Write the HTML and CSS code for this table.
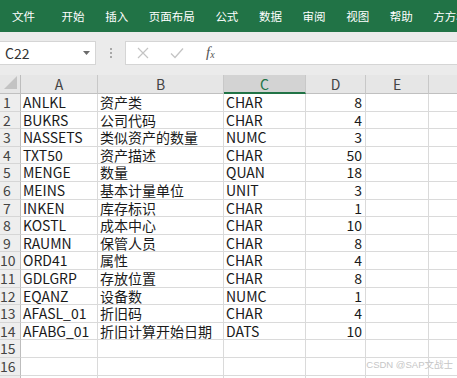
FILE: index.html
```html
<!DOCTYPE html>
<html>
<head>
<meta charset="utf-8">
<link rel="stylesheet" href="styles.css">
</head>
<body>
<div class="app">
  <nav class="ribbon">
    <span class="tab tab-file">文件</span>
    <span class="tab">开始</span>
    <span class="tab">插入</span>
    <span class="tab">页面布局</span>
    <span class="tab">公式</span>
    <span class="tab">数据</span>
    <span class="tab">审阅</span>
    <span class="tab">视图</span>
    <span class="tab">帮助</span>
    <span class="tab">方方格子</span>
  </nav>
  <div class="fbar">
    <div class="namebox">
      <span class="nb-text">C22</span>
      <svg class="nb-arrow" width="7" height="4" viewBox="0 0 7 4"><path d="M0 0H7L3.5 4Z" fill="#6b6b6b"/></svg>
    </div>
    <div class="grip">
      <span class="dot"></span><span class="dot"></span><span class="dot"></span>
    </div>
    <div class="formula">
      <svg class="ficon" width="12" height="12" viewBox="0 0 12 12"><path d="M1 1L11 11M11 1L1 11" stroke="#c4c4c4" stroke-width="1.2" fill="none"/></svg>
      <svg class="ficon ficon-check" width="14" height="12" viewBox="0 0 14 12"><path d="M1 6.5L5 10.5L13 1.5" stroke="#c4c4c4" stroke-width="1.3" fill="none"/></svg>
      <span class="fx">f<sub>x</sub></span>
    </div>
  </div>
  <div class="sheet">
    <div class="hdr corner"><svg width="14" height="14" viewBox="0 0 14 14"><path d="M13 0V13H0Z" fill="#c3c3c3"/></svg></div>
    <div class="hdr col">A</div>
    <div class="hdr col">B</div>
    <div class="hdr col sel">C</div>
    <div class="hdr col">D</div>
    <div class="hdr col">E</div>
    <div class="hdr col hdr-f">F</div>

    <div class="rh">1</div><div class="c">ANLKL</div><div class="c">资产类</div><div class="c">CHAR</div><div class="c n">8</div><div class="c"></div><div class="c"></div>
    <div class="rh">2</div><div class="c">BUKRS</div><div class="c">公司代码</div><div class="c">CHAR</div><div class="c n">4</div><div class="c"></div><div class="c"></div>
    <div class="rh">3</div><div class="c">NASSETS</div><div class="c">类似资产的数量</div><div class="c">NUMC</div><div class="c n">3</div><div class="c"></div><div class="c"></div>
    <div class="rh">4</div><div class="c">TXT50</div><div class="c">资产描述</div><div class="c">CHAR</div><div class="c n">50</div><div class="c"></div><div class="c"></div>
    <div class="rh">5</div><div class="c">MENGE</div><div class="c">数量</div><div class="c">QUAN</div><div class="c n">18</div><div class="c"></div><div class="c"></div>
    <div class="rh">6</div><div class="c">MEINS</div><div class="c">基本计量单位</div><div class="c">UNIT</div><div class="c n">3</div><div class="c"></div><div class="c"></div>
    <div class="rh">7</div><div class="c">INKEN</div><div class="c">库存标识</div><div class="c">CHAR</div><div class="c n">1</div><div class="c"></div><div class="c"></div>
    <div class="rh">8</div><div class="c">KOSTL</div><div class="c">成本中心</div><div class="c">CHAR</div><div class="c n">10</div><div class="c"></div><div class="c"></div>
    <div class="rh">9</div><div class="c">RAUMN</div><div class="c">保管人员</div><div class="c">CHAR</div><div class="c n">8</div><div class="c"></div><div class="c"></div>
    <div class="rh">10</div><div class="c">ORD41</div><div class="c">属性</div><div class="c">CHAR</div><div class="c n">4</div><div class="c"></div><div class="c"></div>
    <div class="rh">11</div><div class="c">GDLGRP</div><div class="c">存放位置</div><div class="c">CHAR</div><div class="c n">8</div><div class="c"></div><div class="c"></div>
    <div class="rh">12</div><div class="c">EQANZ</div><div class="c">设备数</div><div class="c">NUMC</div><div class="c n">1</div><div class="c"></div><div class="c"></div>
    <div class="rh">13</div><div class="c">AFASL_01</div><div class="c">折旧码</div><div class="c">CHAR</div><div class="c n">4</div><div class="c"></div><div class="c"></div>
    <div class="rh">14</div><div class="c">AFABG_01</div><div class="c">折旧计算开始日期</div><div class="c">DATS</div><div class="c n">10</div><div class="c"></div><div class="c"></div>
    <div class="rh">15</div><div class="c"></div><div class="c"></div><div class="c"></div><div class="c n"></div><div class="c"></div><div class="c"></div>
    <div class="rh">16</div><div class="c"></div><div class="c"></div><div class="c"></div><div class="c n"></div><div class="c"></div><div class="c"></div>
    <div class="rh">17</div><div class="c"></div><div class="c"></div><div class="c"></div><div class="c n"></div><div class="c"></div><div class="c"></div>
  </div>
  <div class="watermark">CSDN @SAP文战士</div>
</div>
</body>
</html>
```

FILE: styles.css
```css
html, body {
  margin: 0;
  padding: 0;
  background: #ffffff;
}
body {
  width: 457px;
  height: 378px;
  overflow: hidden;
  font-family: "Noto Sans CJK SC", "Noto Sans", sans-serif;
}
.app {
  position: relative;
  width: 457px;
  height: 378px;
  overflow: hidden;
}
.ribbon {
  height: 32px;
  background: #217346;
  display: flex;
  align-items: center;
  padding-left: 12px;
  gap: 20.6px;
  white-space: nowrap;
  color: #ffffff;
  font-size: 11.5px;
  line-height: 14px;
}
.tab-file {
  margin-right: 6px;
}
.fbar {
  height: 43px;
  box-sizing: border-box;
  background: #ebebeb;
  display: flex;
  align-items: flex-start;
  padding-top: 9px;
}
.namebox {
  width: 96px;
  height: 24px;
  box-sizing: border-box;
  background: #ffffff;
  border: 1px solid #d5d5d5;
  border-left: none;
  display: flex;
  align-items: center;
  justify-content: space-between;
  padding: 0 5px 0 5px;
  flex: none;
}
.nb-text {
  font-size: 14px;
  color: #333333;
  line-height: 16px;
}
.grip {
  width: 29px;
  height: 24px;
  flex: none;
  display: flex;
  flex-direction: column;
  align-items: center;
  justify-content: center;
  gap: 2px;
}
.dot {
  width: 2px;
  height: 2px;
  background: #a8a8a8;
}
.formula {
  flex: 1;
  height: 24px;
  box-sizing: border-box;
  background: #ffffff;
  border: 1px solid #d5d5d5;
  border-right: none;
  display: flex;
  align-items: center;
  padding-left: 11px;
  gap: 21px;
}
.fx {
  font-family: "Liberation Serif", serif;
  font-style: italic;
  font-size: 15px;
  color: #555555;
  line-height: 14px;
  margin-left: 1px;
}
.fx sub {
  font-size: 10px;
  vertical-align: -1px;
}
.sheet {
  display: grid;
  grid-template-columns: 21px 77px 126px 82px 60px 63px 64px;
  grid-template-rows: 19px;
  grid-auto-rows: 17.6px;
  font-size: 14px;
  color: #1a1a1a;
  background: #ebebeb;
}
.hdr {
  background: #e6e6e6;
  border-right: 1px solid #c8c8c8;
  border-bottom: 1px solid #c0c0c0;
  box-sizing: border-box;
  color: #444444;
  text-align: center;
  line-height: 18px;
  font-size: 14px;
  white-space: nowrap;
  overflow: hidden;
}
.hdr-f {
  color: #c98a3a;
}
.corner {
  display: flex;
  align-items: flex-end;
  justify-content: flex-end;
  padding: 0 2px 3px 0;
  border-right: 1px solid #bdbdbd;
}
.corner svg {
  display: block;
}
.hdr.sel {
  background: #d3d3d3;
  color: #217346;
  border-bottom: 2px solid #217346;
}
.rh {
  background: #eeeeee;
  border-right: 1px solid #bdbdbd;
  border-bottom: 1px solid #d6d6d6;
  box-sizing: border-box;
  color: #444444;
  text-align: center;
  padding-right: 6px;
  line-height: 16px;
  white-space: nowrap;
}
.c {
  background: #ffffff;
  border-right: 1px solid #dadada;
  border-bottom: 1px solid #dadada;
  box-sizing: border-box;
  padding-left: 2px;
  line-height: 16px;
  white-space: nowrap;
  overflow: hidden;
}
.c.n {
  text-align: right;
  padding-right: 3px;
}
.watermark {
  position: absolute;
  right: 4px;
  bottom: 7px;
  font-size: 9.5px;
  color: #c6c6c6;
  line-height: 12px;
  font-family: "Liberation Sans", "Noto Sans CJK SC", sans-serif;
}
```
